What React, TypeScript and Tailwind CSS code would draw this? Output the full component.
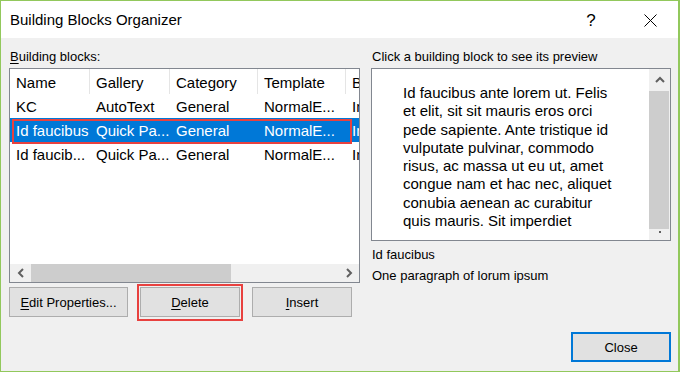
import React from 'react';

const sans = { fontFamily: '"Liberation Sans", Arial, sans-serif' };

const columns = [
  { label: 'Name', w: 'w-[80px]' },
  { label: 'Gallery', w: 'w-[80px]' },
  { label: 'Category', w: 'w-[88px]' },
  { label: 'Template', w: 'w-[88px]' },
  { label: 'Behavior', w: 'flex-1' },
];

const rows = [
  { cells: ['KC', 'AutoText', 'General', 'NormalE...', 'Insert'], selected: false },
  { cells: ['Id faucibus', 'Quick Pa...', 'General', 'NormalE...', 'Insert'], selected: true },
  { cells: ['Id faucib...', 'Quick Pa...', 'General', 'NormalE...', 'Insert'], selected: false },
];

const previewLines = [
  'Id faucibus ante lorem ut. Felis',
  'et elit, sit sit mauris eros orci',
  'pede sapiente. Ante tristique id',
  'vulputate pulvinar, commodo',
  'risus, ac massa ut eu ut, amet',
  'congue nam et hac nec, aliquet',
  'conubia aenean ac curabitur',
  'quis mauris. Sit imperdiet',
];

const Chevron = ({ dir }: { dir: 'left' | 'right' | 'up' }) => {
  const pts = {
    left: '6,1 2,5 6,9',
    right: '2,1 6,5 2,9',
    up: '1,6 5,2 9,6',
  }[dir];
  const size = dir === 'up' ? { w: 10, h: 8 } : { w: 8, h: 10 };
  return (
    <svg width={size.w} height={size.h} viewBox={`0 0 ${size.w} ${size.h}`}>
      <polyline points={pts} fill="none" stroke="#606060" strokeWidth="2" />
    </svg>
  );
};

const Button = ({ children, className = '' }: { children: React.ReactNode; className?: string }) => (
  <div
    className={`h-[30px] flex items-center justify-center pt-[1px] bg-[#e1e1e1] border border-[#adadad] text-[13px] text-black ${className}`}
  >
    {children}
  </div>
);

export default function App() {
  return (
    <div className="w-[680px] h-[373px] bg-white" style={sans}>
      <div className="h-[372px] flex flex-col border border-r-2 border-[#92c85c]">
        {/* title bar */}
        <div className="h-[37px] bg-white flex items-center pl-[9px] pr-[5px] pt-[2px]">
          <span className="text-[15px] text-black">Building Blocks Organizer</span>
          <div className="ml-auto flex items-center gap-[12px]">
            <div className="w-[46px] flex justify-center pr-[2px] text-[17px] text-black leading-none">?</div>
            <div className="w-[46px] flex justify-center">
              <svg width="13" height="13" viewBox="0 0 13 13">
                <path d="M0.5 0.5 L12.5 12.5 M12.5 0.5 L0.5 12.5" stroke="#000" strokeWidth="1" />
              </svg>
            </div>
          </div>
        </div>

        {/* body */}
        <div className="flex-1 bg-[#f0f0f0] flex gap-[11px] pl-[8px] pt-[10px] pb-[9px]">
          {/* left column */}
          <div className="w-[351px] flex flex-col">
            <div className="h-[16px] leading-[16px] pt-[1px] text-[13px] text-black pl-[1px] mb-[4px]">
              <u className="underline-offset-2">B</u>uilding blocks:
            </div>
            <div className="relative h-[215px] border border-[#828790] bg-white flex flex-col overflow-hidden">
              <div className="flex h-[25px] text-[15px] text-black">
                {columns.map((c, i) => (
                  <div
                    key={c.label}
                    className={`${c.w} shrink-0 h-full flex items-center pl-[6px] pt-[4px] whitespace-nowrap overflow-hidden ${
                      i < columns.length - 1 ? 'border-r border-[#e5e5e5]' : ''
                    }`}
                  >
                    {c.label}
                  </div>
                ))}
              </div>
              {rows.map((r, ri) => (
                <div
                  key={ri}
                  className={`flex h-[24px] text-[15px] ${r.selected ? 'bg-[#0078d7] text-white' : 'text-black'}`}
                >
                  {r.cells.map((cell, i) => (
                    <div
                      key={i}
                      className={`${columns[i].w} shrink-0 h-full flex items-center pl-[6px] pt-[3px] whitespace-nowrap overflow-hidden`}
                    >
                      {cell}
                    </div>
                  ))}
                </div>
              ))}
              <div className="flex-1" />
              <div className="flex h-[18px] bg-[#f0f0f0]">
                <div className="w-[21px] flex items-center justify-center">
                  <Chevron dir="left" />
                </div>
                <div className="w-[200px] bg-[#cdcdcd]" />
                <div className="flex-1" />
                <div className="w-[21px] flex items-center justify-center">
                  <Chevron dir="right" />
                </div>
              </div>
              {/* red annotation around selected row */}
              <div className="absolute left-[2px] top-[50px] w-[340px] h-[25px] border-2 border-[#e8413f]" />
            </div>

            <div className="flex gap-[12px] mt-[4px]">
              <Button className="w-[119px]">
                <span>
                  <u className="underline-offset-2">E</u>dit Properties...
                </span>
              </Button>
              <div className="relative">
                <Button className="w-[100px]">
                  <span>
                    <u className="underline-offset-2">D</u>elete
                  </span>
                </Button>
                <div className="absolute left-[-3px] right-[-3px] top-[-3px] bottom-[-4px] border-2 border-[#e8413f]" />
              </div>
              <Button className="w-[100px]">
                <span>
                  <u className="underline-offset-2">I</u>nsert
                </span>
              </Button>
            </div>
          </div>

          {/* right column */}
          <div className="w-[300px] flex flex-col">
            <div className="h-[16px] leading-[16px] pt-[1px] text-[13px] text-black pl-[1px] mb-[4px]">
              Click a building block to see its preview
            </div>
            <div className="h-[173px] border border-[#828790] bg-white flex">
              <div className="flex-1 pl-[31px] pt-[15px] text-[15px] leading-[18.3px] text-black">
                {previewLines.map((l) => (
                  <div key={l} className="whitespace-nowrap">
                    {l}
                  </div>
                ))}
              </div>
              <div className="w-[21px] bg-[#f0f0f0] flex flex-col">
                <div className="h-[22px] flex items-center justify-center">
                  <Chevron dir="up" />
                </div>
                <div className="w-[20px] h-[138px] bg-[#cdcdcd]" />
                <div className="flex justify-center pt-[2px]">
                  <div className="w-[2px] h-[2px] bg-[#606060]" />
                </div>
              </div>
            </div>
            <div className="mt-[5px] h-[16px] leading-[16px] pt-[1px] text-[13px] text-black pl-[1px]">Id faucibus</div>
            <div className="mt-[5px] h-[16px] leading-[16px] pt-[1px] text-[13px] text-black pl-[1px]">
              One paragraph of lorum ipsum
            </div>
            <div className="mt-auto self-end w-[100px] h-[30px] flex items-center justify-center pt-[1px] bg-[#e1e1e1] border-2 border-[#0078d7] text-[13px] text-black">
              Close
            </div>
          </div>
        </div>
      </div>
    </div>
  );
}
